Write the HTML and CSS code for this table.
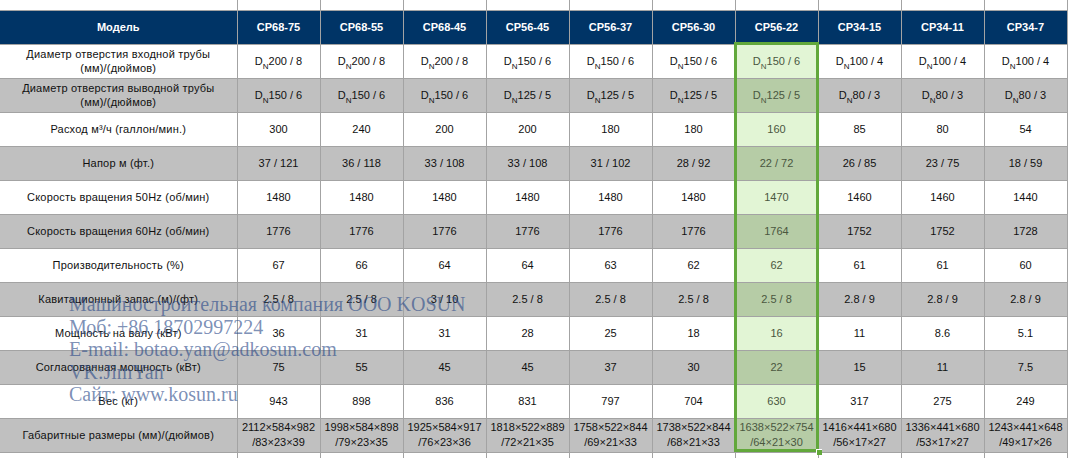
FILE: index.html
```html
<!DOCTYPE html>
<html lang="ru">
<head>
<meta charset="utf-8">
<title>Насосы CP</title>
<link rel="stylesheet" href="styles.css">
</head>
<body>
<div class="sheet">
<table class="spec">
<colgroup>
<col class="c-label">
<col class="c-val"><col class="c-val"><col class="c-val"><col class="c-val"><col class="c-val">
<col class="c-val"><col class="c-val"><col class="c-val"><col class="c-val"><col class="c-val">
<col class="c-rest">
</colgroup>
<tbody>
<tr class="r-top"><td></td><td></td><td></td><td></td><td></td><td></td><td></td><td></td><td></td><td></td><td></td><td class="rest"></td></tr>
<tr class="r-head">
<th>Модель</th><th>CP68-75</th><th>CP68-55</th><th>CP68-45</th><th>CP56-45</th><th>CP56-37</th><th>CP56-30</th><th>CP56-22</th><th>CP34-15</th><th>CP34-11</th><th>CP34-7</th><td class="rest"></td>
</tr>
<tr class="w">
<td class="lbl">Диаметр отверстия входной трубы<br>(мм)/(дюймов)</td>
<td>D<sub>N</sub>200 / 8</td><td>D<sub>N</sub>200 / 8</td><td>D<sub>N</sub>200 / 8</td><td>D<sub>N</sub>150 / 6</td><td>D<sub>N</sub>150 / 6</td><td>D<sub>N</sub>150 / 6</td><td class="sel">D<sub>N</sub>150 / 6</td><td>D<sub>N</sub>100 / 4</td><td>D<sub>N</sub>100 / 4</td><td>D<sub>N</sub>100 / 4</td><td class="rest"></td>
</tr>
<tr class="g">
<td class="lbl">Диаметр отверстия выводной трубы<br>(мм)/(дюймов)</td>
<td>D<sub>N</sub>150 / 6</td><td>D<sub>N</sub>150 / 6</td><td>D<sub>N</sub>150 / 6</td><td>D<sub>N</sub>125 / 5</td><td>D<sub>N</sub>125 / 5</td><td>D<sub>N</sub>125 / 5</td><td class="sel">D<sub>N</sub>125 / 5</td><td>D<sub>N</sub>80 / 3</td><td>D<sub>N</sub>80 / 3</td><td>D<sub>N</sub>80 / 3</td><td class="rest"></td>
</tr>
<tr class="w">
<td class="lbl">Расход м³/ч (галлон/мин.)</td>
<td>300</td><td>240</td><td>200</td><td>200</td><td>180</td><td>180</td><td class="sel">160</td><td>85</td><td>80</td><td>54</td><td class="rest"></td>
</tr>
<tr class="g">
<td class="lbl">Напор м (фт.)</td>
<td>37 / 121</td><td>36 / 118</td><td>33 / 108</td><td>33 / 108</td><td>31 / 102</td><td>28 / 92</td><td class="sel">22 / 72</td><td>26 / 85</td><td>23 / 75</td><td>18 / 59</td><td class="rest"></td>
</tr>
<tr class="w">
<td class="lbl">Скорость вращения 50Hz (об/мин)</td>
<td>1480</td><td>1480</td><td>1480</td><td>1480</td><td>1480</td><td>1480</td><td class="sel">1470</td><td>1460</td><td>1460</td><td>1440</td><td class="rest"></td>
</tr>
<tr class="g">
<td class="lbl">Скорость вращения 60Hz (об/мин)</td>
<td>1776</td><td>1776</td><td>1776</td><td>1776</td><td>1776</td><td>1776</td><td class="sel">1764</td><td>1752</td><td>1752</td><td>1728</td><td class="rest"></td>
</tr>
<tr class="w">
<td class="lbl">Производительность (%)</td>
<td>67</td><td>66</td><td>64</td><td>64</td><td>63</td><td>62</td><td class="sel">62</td><td>61</td><td>61</td><td>60</td><td class="rest"></td>
</tr>
<tr class="g">
<td class="lbl">Кавитационный запас (м)/(фт)</td>
<td>2.5 / 8</td><td>2.5 / 8</td><td>3 / 10</td><td>2.5 / 8</td><td>2.5 / 8</td><td>2.5 / 8</td><td class="sel">2.5 / 8</td><td>2.8 / 9</td><td>2.8 / 9</td><td>2.8 / 9</td><td class="rest"></td>
</tr>
<tr class="w">
<td class="lbl">Мощность на валу (кВт)</td>
<td>36</td><td>31</td><td>31</td><td>28</td><td>25</td><td>18</td><td class="sel">16</td><td>11</td><td>8.6</td><td>5.1</td><td class="rest"></td>
</tr>
<tr class="g">
<td class="lbl">Согласованная мощность (кВт)</td>
<td>75</td><td>55</td><td>45</td><td>45</td><td>37</td><td>30</td><td class="sel">22</td><td>15</td><td>11</td><td>7.5</td><td class="rest"></td>
</tr>
<tr class="w">
<td class="lbl">Вес (кг)</td>
<td>943</td><td>898</td><td>836</td><td>831</td><td>797</td><td>704</td><td class="sel">630</td><td>317</td><td>275</td><td>249</td><td class="rest"></td>
</tr>
<tr class="g dims">
<td class="lbl">Габаритные размеры (мм)/(дюймов)</td>
<td>2112×584×982<br>/83×23×39</td><td>1998×584×898<br>/79×23×35</td><td>1925×584×917<br>/76×23×36</td><td>1818×522×889<br>/72×21×35</td><td>1758×522×844<br>/69×21×33</td><td>1738×522×844<br>/68×21×33</td><td class="sel">1638×522×754<br>/64×21×30</td><td>1416×441×680<br>/56×17×27</td><td>1336×441×680<br>/53×17×27</td><td>1243×441×648<br>/49×17×26</td><td class="rest"></td>
</tr>
<tr class="r-bottom"><td></td><td></td><td></td><td></td><td></td><td></td><td></td><td></td><td></td><td></td><td></td><td class="rest"></td></tr>
</tbody>
</table>

<div class="selection"><span class="handle"></span></div>

<div class="watermark">
<p>Машиностроительная компания ООО KOSUN</p>
<p>Моб: +86 18702997224</p>
<p>E-mail: botao.yan@adkosun.com</p>
<p>VK:JimYan</p>
<p>Сайт: www.kosun.ru</p>
</div>
</div>
</body>
</html>
```

FILE: styles.css
```css
html, body {
  margin: 0;
  padding: 0;
  background: #ffffff;
  overflow: hidden;
}

.sheet {
  position: relative;
  width: 1072px;
  height: 458px;
  overflow: hidden;
  font-family: "Liberation Sans", Arial, sans-serif;
  font-size: 11px;
  color: #111111;
}

.spec {
  border-collapse: collapse;
  table-layout: fixed;
  width: 1072px;
}

.c-label { width: 237px; }
.c-val { width: 83px; }
.c-rest { width: 5px; }

.spec td,
.spec th {
  border: 1px solid #a3a3a3;
  padding: 0;
  text-align: center;
  vertical-align: middle;
  line-height: 14px;
  white-space: nowrap;
  overflow: hidden;
}

.spec td.lbl {
  letter-spacing: 0.2px;
}

.spec td.rest {
  border-right: none;
  border-top: none;
  border-bottom: none;
  background: #ffffff;
}

.spec tr:first-child td { border-top: none; }
.spec td:first-child,
.spec th:first-child { border-left: none; }

.r-top { height: 10px; }
.r-top td { background: #ffffff; }

.r-head { height: 34px; }
.r-head th {
  background: #003466;
  color: #ffffff;
  font-weight: bold;
  font-size: 11px;
}

.w, .g { height: 34px; }
.w td { background: #ffffff; }
.g td { background: #c0c0c0; }

.dims td { line-height: 15px; }

.spec sub {
  font-size: 8px;
  line-height: 0;
  vertical-align: -4px;
}

.w td.sel { background: #e2f5d5; color: #4a573f; }
.g td.sel { background: #b6cca6; color: #4a573f; }

.r-bottom { height: 20px; }
.r-bottom td { background: #ffffff; border-bottom: none; }

.selection {
  position: absolute;
  left: 734px;
  top: 42px;
  width: 79px;
  height: 404px;
  border: 3px solid #62a83b;
  pointer-events: none;
}

.handle {
  position: absolute;
  right: -6px;
  bottom: -6px;
  width: 5px;
  height: 5px;
  background: #62a83b;
  border-left: 1px solid #ffffff;
  border-top: 1px solid #ffffff;
}

.watermark {
  position: absolute;
  left: 69px;
  top: 293px;
  font-family: "Liberation Serif", "Times New Roman", serif;
  font-size: 20px;
  line-height: 22.5px;
  color: rgba(40, 72, 135, 0.62);
  white-space: nowrap;
  pointer-events: none;
}

.watermark p {
  margin: 0;
}
```
